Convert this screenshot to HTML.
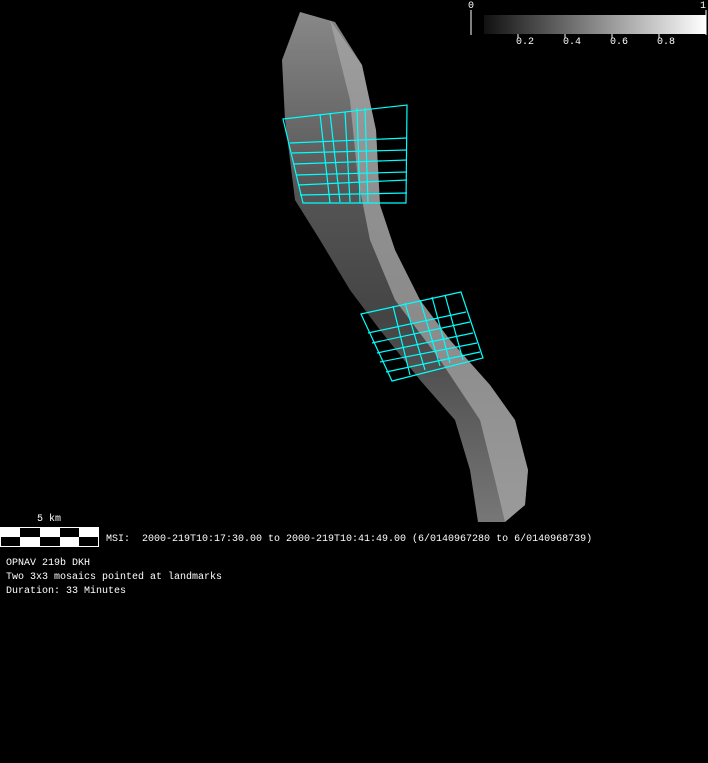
<!DOCTYPE html>
<html><head><style>
html,body{margin:0;padding:0;background:#000;width:708px;height:763px;overflow:hidden}
.t{position:absolute;color:#fff;font-family:"Liberation Mono",monospace;font-size:10px;line-height:14px;white-space:pre}
</style></head><body>
<svg width="708" height="763" style="position:absolute;left:0;top:0">
<defs>
<linearGradient id="g2" x1="0" y1="0" x2="0" y2="1">
<stop offset="0" stop-color="#888"/><stop offset="0.35" stop-color="#555"/><stop offset="0.6" stop-color="#444"/><stop offset="1" stop-color="#777"/>
</linearGradient>
</defs>
<path d="M300,12 L282,60 L285,120 L295,200 L320,240 L350,290 L380,330 L420,380 L455,420 L470,470 L478,522 L505,522 L525,505 L528,470 L515,420 L490,385 L450,340 L420,300 L395,250 L380,205 L376,130 L362,65 L335,22 Z" fill="url(#g2)"/>
<path d="M330,20 L362,65 L376,130 L380,205 L395,250 L420,300 L450,340 L490,385 L515,420 L528,470 L525,505 L505,522 L495,480 L480,420 L440,360 L395,300 L370,240 L358,180 L350,100 Z" fill="#aaa" opacity="0.7"/>
<g stroke="#0ff" stroke-width="1.2" fill="none">
<path d="M283,119 L407,105 L406,203 L303,203 Z"/>
<path d="M290,143 L407,138 M292,153 L407,150 M294,164 L407,160 M296,175 L407,172 M298,185 L407,180 M300,195 L407,193"/>
<path d="M320,114 L330,203 M330,113 L340,202 M345,112 L350,202 M357,108 L360,203 M365,108 L368,203"/>
<path d="M361,314 L461,292 L483,358 L392,381 Z"/>
<path d="M368,333 L466,312 M372,343 L470,322 M377,353 L473,333 M380,362 L477,343 M386,372 L480,352"/>
<path d="M393,306 L410,375 M405,303 L425,370 M420,300 L440,366 M432,297 L450,363 M445,295 L463,360"/>
</g>
<rect x="0.5" y="527.5" width="98" height="19" fill="#000" stroke="#fff"/>
<rect x="0" y="527" width="20" height="10" fill="#fff"/>
<rect x="40" y="527" width="20" height="10" fill="#fff"/>
<rect x="79" y="527" width="20" height="10" fill="#fff"/>
<rect x="20" y="537" width="20" height="10" fill="#fff"/>
<rect x="60" y="537" width="19" height="10" fill="#fff"/>
<line x1="471" y1="10" x2="471" y2="35" stroke="#fff"/>
<line x1="706" y1="10" x2="706" y2="35" stroke="#fff"/>
<line x1="518" y1="34" x2="518" y2="38" stroke="#fff"/>
<line x1="565" y1="34" x2="565" y2="38" stroke="#fff"/>
<line x1="612" y1="34" x2="612" y2="38" stroke="#fff"/>
<line x1="659" y1="34" x2="659" y2="38" stroke="#fff"/>
</svg>
<div style="position:absolute;left:484px;top:15px;width:222px;height:19px;background:linear-gradient(90deg,#111,#fff)"></div>
<div class="t" style="left:468px;top:0px">0</div>
<div class="t" style="left:700px;top:0px">1</div>
<div class="t" style="left:516px;top:36px">0.2</div>
<div class="t" style="left:563px;top:36px">0.4</div>
<div class="t" style="left:610px;top:36px">0.6</div>
<div class="t" style="left:657px;top:36px">0.8</div>
<div class="t" style="left:37px;top:513px">5 km</div>
<div class="t" style="left:106px;top:533px">MSI:  2000-219T10:17:30.00 to 2000-219T10:41:49.00 (6/0140967280 to 6/0140968739)</div>
<div class="t" style="left:6px;top:557px">OPNAV 219b DKH
Two 3x3 mosaics pointed at landmarks
Duration: 33 Minutes</div>
</body></html>
